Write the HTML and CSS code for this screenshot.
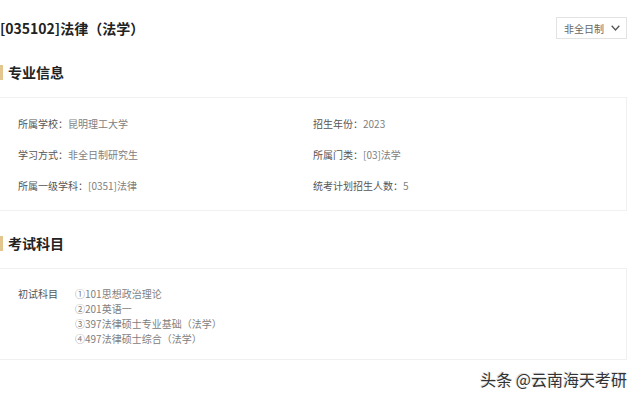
FILE: index.html
```html
<!DOCTYPE html>
<html lang="zh-CN">
  <head>
    <meta charset="UTF-8" />
    <meta name="viewport" content="width=device-width, initial-scale=1.0" />
    <title>专业详情</title>
    <link rel="stylesheet" href="styles.css">
  </head>
  <body>
    <div class="page">
      <div class="top-bar">
        <h1 class="major-title">[035102]法律（法学）</h1>
        <div class="mode-select">
          <span>非全日制</span>
          <svg width="9" height="6" viewBox="0 0 9 6"><path d="M0.7 0.7 L4.5 5 L8.3 0.7" fill="none" stroke="#555" stroke-width="1.3"/></svg>
        </div>
      </div>

      <div class="section-head">专业信息</div>
      <div class="info-box">
        <div class="info-grid">
          <div class="info-item"><span class="label">所属学校：</span><span class="value">昆明理工大学</span></div>
          <div class="info-item"><span class="label">招生年份：</span><span class="value">2023</span></div>
          <div class="info-item"><span class="label">学习方式：</span><span class="value">非全日制研究生</span></div>
          <div class="info-item"><span class="label">所属门类：</span><span class="value">[03]法学</span></div>
          <div class="info-item"><span class="label">所属一级学科：</span><span class="value">[0351]法律</span></div>
          <div class="info-item"><span class="label">统考计划招生人数：</span><span class="value">5</span></div>
        </div>
      </div>

      <div class="section-head">考试科目</div>
      <div class="info-box exam-box">
        <div class="exam-row">
          <span class="label">初试科目</span>
          <ul class="subject-list">
            <li>①101思想政治理论</li>
            <li>②201英语一</li>
            <li>③397法律硕士专业基础（法学）</li>
            <li>④497法律硕士综合（法学）</li>
          </ul>
        </div>
      </div>

      <div class="watermark">头条 @云南海天考研</div>
    </div>
  </body>
</html>
```

FILE: styles.css
```css
body {
  margin: 0;
  background: #fff;
  font-family: "Noto Sans CJK SC", "Noto Sans", sans-serif;
  color: #333;
}
.page {
  width: 627px;
  height: 398px;
  overflow: hidden;
}
.top-bar {
  display: flex;
  align-items: center;
  justify-content: space-between;
  margin-top: 17px;
  height: 22px;
}
.major-title {
  margin: 0;
  font-size: 14px;
  font-weight: bold;
  color: #222;
  line-height: 22px;
}
.mode-select {
  box-sizing: border-box;
  width: 71px;
  height: 22px;
  border: 1px solid #e3e3e3;
  display: flex;
  align-items: center;
  gap: 7px;
  padding-left: 7px;
  font-size: 10px;
  color: #666;
}
.section-head {
  margin-top: 25px;
  height: 15px;
  line-height: 15px;
  border-left: 3px solid #e3c68e;
  padding-left: 5px;
  font-size: 14px;
  font-weight: bold;
  color: #222;
}
.top-bar + .section-head {
  margin-top: 26px;
}
.info-box {
  margin-top: 17px;
  margin-left: -1px;
  border: 1px solid #f0f0f0;
  padding: 10px 0 9px 18px;
}
.info-grid {
  display: grid;
  grid-template-columns: 295px 1fr;
}
.info-item {
  height: 31px;
  line-height: 31px;
  font-size: 10px;
}
.label {
  color: #555;
}
.value {
  color: #808080;
}
.exam-box {
  padding: 17px 0 13px 18px;
}
.exam-row {
  display: flex;
  font-size: 10px;
  line-height: 15px;
}
.exam-row .label {
  width: 57px;
}
.subject-list {
  margin: 0;
  padding: 0;
  list-style: none;
  color: #808080;
}
.watermark {
  margin-top: 9px;
  text-align: right;
  font-size: 16px;
  line-height: 20px;
  color: #333;
  text-shadow: 1px 1px 0 #fff, -1px -1px 0 #ddd;
}
```
